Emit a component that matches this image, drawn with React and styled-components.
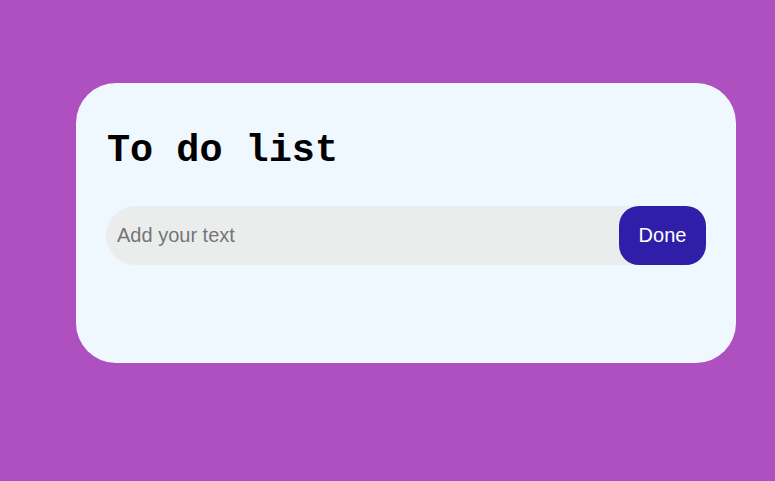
import React from "react";
import styled, { createGlobalStyle } from "styled-components";

const Global = createGlobalStyle`
  html, body { margin: 0; padding: 0; }
  body {
    background: #ae50bf;
    min-height: 100vh;
    font-family: "Liberation Sans", Arial, sans-serif;
  }
`;

const Page = styled.div`
  padding: 83px 0 0 76px;
`;

const Card = styled.div`
  width: 600px;
  background: #eff7ff;
  border-radius: 40px;
  padding: 44px 30px 98px;
`;

const Title = styled.h2`
  margin: 0 0 31px 1px;
  font-family: "Liberation Mono", "Courier New", monospace;
  font-weight: 700;
  font-size: 38.5px;
  line-height: 48px;
  color: #000;
`;

const Row = styled.div`
  display: flex;
  align-items: stretch;
  height: 59px;
  background: #ebeded;
  border-radius: 30px;
`;

const Input = styled.input`
  flex: 1;
  min-width: 0;
  border: none;
  outline: none;
  background: transparent;
  padding: 0 0 0 11px;
  font-family: "Liberation Sans", Arial, sans-serif;
  font-size: 20px;
  color: #333;
  &::placeholder { color: #757575; }
`;

const Button = styled.button`
  border: none;
  outline: none;
  width: 87px;
  background: #2f1fa8;
  color: #fff;
  font-family: "Liberation Sans", Arial, sans-serif;
  font-size: 20px;
  border-radius: 20px;
  cursor: pointer;
  padding: 0;
`;

export default function App() {
  return (
    <>
      <Global />
      <Page>
        <Card>
          <Title>To do list</Title>
          <Row>
            <Input placeholder="Add your text" />
            <Button>Done</Button>
          </Row>
        </Card>
      </Page>
    </>
  );
}
